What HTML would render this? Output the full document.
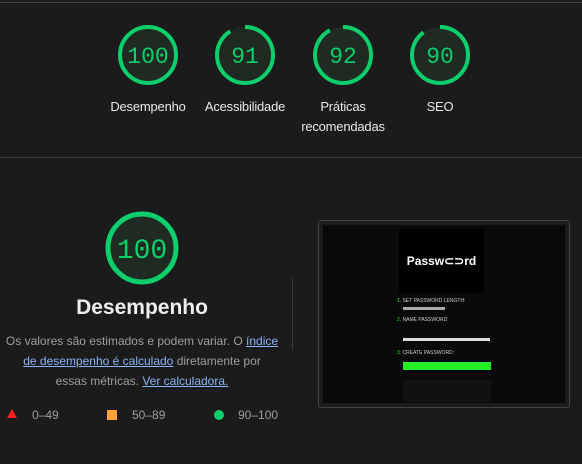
<!DOCTYPE html>
<html><head><style>
body{margin:0;width:582px;height:464px;background:#1b1b1b;font-family:"Liberation Sans",Arial,sans-serif;overflow:hidden;position:relative}
.abs{position:absolute}
.lbl{position:absolute;color:#e8e8e8;font-size:13px;text-align:center;width:100px;line-height:20px;letter-spacing:-0.2px}
.num{font-family:"Liberation Mono",monospace;fill:#0cce6b}
a{color:#8ab4f8;text-decoration:underline}
</style></head><body>
<div class="abs" style="left:0;top:2px;width:582px;height:1px;background:#444"></div>
<svg class="abs" style="left:0;top:0" width="582" height="160">
<g fill="#1e2a22" stroke="#0cce6b" stroke-width="4">
<circle cx="148" cy="55" r="28"/>
</g>
<g fill="#1e2a22" stroke="#0cce6b" stroke-width="4" transform="rotate(-90)">
<circle cx="-55" cy="245" r="28" stroke-dasharray="160 200"/>
<circle cx="-55" cy="343" r="28" stroke-dasharray="162 200"/>
<circle cx="-55" cy="440" r="28" stroke-dasharray="158 200"/>
</g>
<g class="num" font-size="23" text-anchor="middle">
<text x="148" y="63">100</text><text x="245" y="63">91</text><text x="343" y="63">92</text><text x="440" y="63">90</text>
</g>
</svg>
<div class="lbl" style="left:98px;top:97px">Desempenho</div>
<div class="lbl" style="left:195px;top:97px">Acessibilidade</div>
<div class="lbl" style="left:293px;top:97px">Práticas recomendadas</div>
<div class="lbl" style="left:390px;top:97px">SEO</div>
<div class="abs" style="left:0;top:157px;width:582px;height:1px;background:#3a3a3a"></div>
<svg class="abs" style="left:100px;top:206px" width="84" height="84">
<circle cx="42" cy="42" r="34" fill="#1e2a22" stroke="#0cce6b" stroke-width="5"/>
<text x="42" y="52" class="num" font-size="28" text-anchor="middle">100</text>
</svg>
<div class="abs" style="left:0;width:284px;top:296px;text-align:center;color:#eee;font-size:21px;font-weight:bold">Desempenho</div>
<div class="abs" style="left:-10px;width:304px;top:331px;text-align:center;color:#9e9e9e;font-size:12px;line-height:20px;white-space:nowrap">Os valores são estimados e podem variar. O <a>índice</a><br><a>de desempenho é calculado</a> diretamente por<br>essas métricas. <a>Ver calculadora.</a></div>
<div class="abs" style="left:292px;top:278px;width:1px;height:72px;background:#3a3a3a"></div>
<svg class="abs" style="left:6px;top:408px" width="12" height="12"><polygon points="6,1 11,10 1,10" fill="#ff1e1e"/></svg>
<div class="abs" style="left:32px;top:408px;color:#9e9e9e;font-size:12px">0–49</div>
<div class="abs" style="left:107px;top:410px;width:10px;height:10px;background:#ffa33a"></div>
<div class="abs" style="left:132px;top:408px;color:#9e9e9e;font-size:12px">50–89</div>
<div class="abs" style="left:214px;top:410px;width:10px;height:10px;border-radius:50%;background:#0cce6b"></div>
<div class="abs" style="left:238px;top:408px;color:#9e9e9e;font-size:12px">90–100</div>
<div class="abs" style="left:318px;top:220px;width:250px;height:186px;border:1px solid #444;border-radius:3px;background:#1b1b1b">
<div class="abs" style="left:4px;top:4px;width:242px;height:178px;background:#0a0a0a">
<div class="abs" style="left:76px;top:4px;width:85px;height:64px;background:#000;color:#fff;font-weight:bold;font-size:12px;line-height:64px;text-align:center">Passw⊂⊃rd</div>
<div class="abs" style="left:74px;top:73px;color:#2e2;font-size:5px">1. <span style="color:#ccc">SET PASSWORD LENGTH:</span></div>
<div class="abs" style="left:80px;top:82px;width:42px;height:3px;background:#aaa"></div>
<div class="abs" style="left:74px;top:92px;color:#2e2;font-size:5px">2. <span style="color:#ccc">NAME PASSWORD:</span></div>
<div class="abs" style="left:80px;top:113px;width:87px;height:3px;background:#ddd"></div>
<div class="abs" style="left:74px;top:125px;color:#2e2;font-size:5px">3. <span style="color:#ccc">CREATE PASSWORD:</span></div>
<div class="abs" style="left:80px;top:137px;width:88px;height:8px;background:#2e2"></div>
<div class="abs" style="left:80px;top:155px;width:88px;height:22px;background:#111"></div>
</div></div>
</body></html>
